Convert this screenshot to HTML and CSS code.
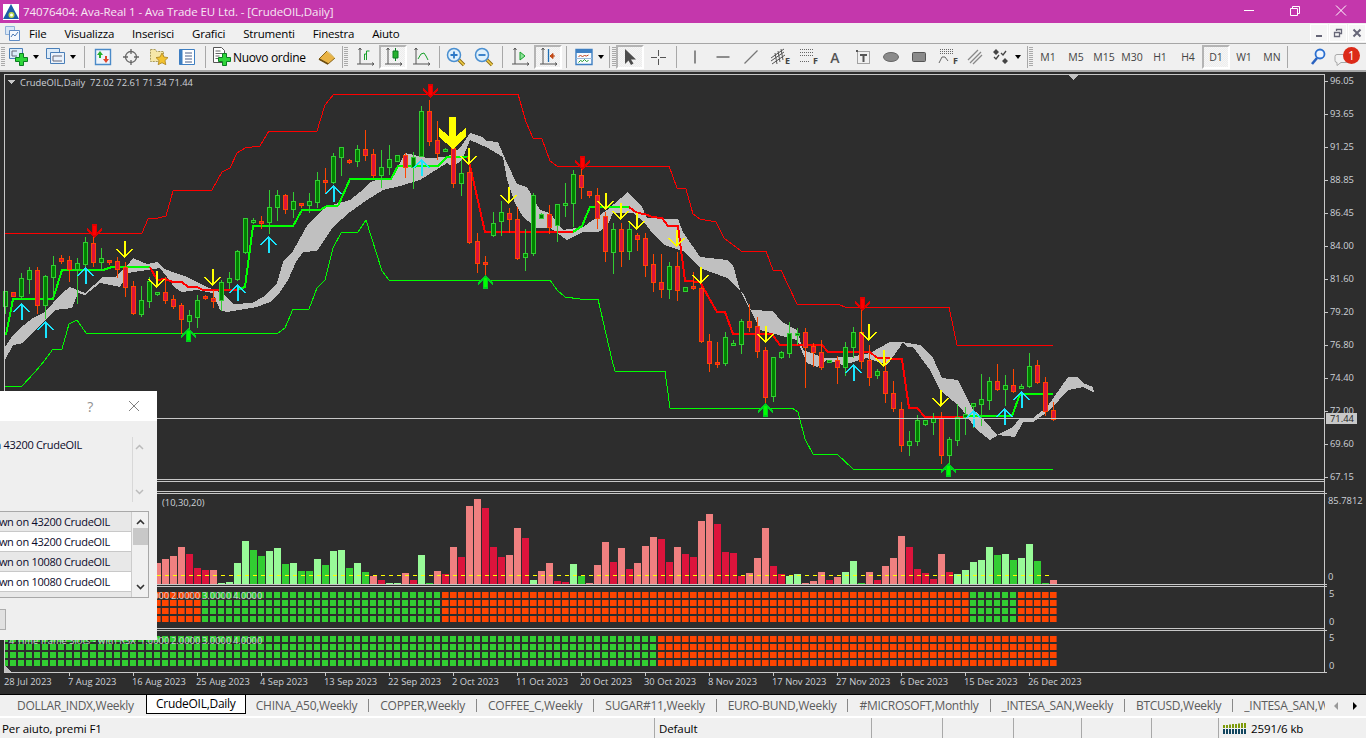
FILE: index.html
```html
<!DOCTYPE html>
<html lang="it">
  <head>
    <meta charset="UTF-8" />
    <title>74076404: Ava-Real 1 - Ava Trade EU Ltd. - [CrudeOIL,Daily]</title>
    <link rel="stylesheet" href="styles.css">
  </head>
  <body>
    <svg class="defs" width="0" height="0">
      <symbol id="plus" viewBox="0 0 13 13"><path d="M4.5.5h4v4h4v4h-4v4h-4v-4h-4v-4h4z" fill="#2fd53a" stroke="#0b7d22"/></symbol>
      <symbol id="axes" viewBox="0 0 20 20"><path d="M5 1v16M2 17h17M3.5 3L5 1l1.5 2M17 15.5l2 1.5-2 1.5" fill="none" stroke="#555"/></symbol>
      <symbol id="lens" viewBox="0 0 20 20"><path d="M12 12l6 6" stroke="#8a6a10" stroke-width="3.4"/><path d="M12 12l6 6" stroke="#f2cf4a" stroke-width="1.6"/><circle cx="8" cy="8" r="6.5" fill="#dff0fb" stroke="#4a8fd0" stroke-width="1.5"/></symbol>
    </svg>

    <header class="titlebar">
      <svg class="app-logo" width="16" height="16" viewBox="0 0 16 16"><rect width="16" height="16" fill="#fff"/><path d="M8 0L16 15H0z" fill="#1d5ba8"/><circle cx="8.5" cy="11" r="3" fill="#b9d64a"/><circle cx="8.5" cy="11" r="1.5" fill="#fff"/></svg>
      <span class="title-text">74076404: Ava-Real 1 - Ava Trade EU Ltd. - [CrudeOIL,Daily]</span>
      <div class="win-btns">
        <svg width="46" height="23" viewBox="0 0 46 23"><path d="M18 10.5h10" stroke="#fff"/></svg>
        <svg width="46" height="23" viewBox="0 0 46 23"><path d="M18.5 8.5h7v7h-7zM20.5 8V6.5h7v7H26" fill="none" stroke="#fff"/></svg>
        <svg width="46" height="23" viewBox="0 0 46 23"><path d="M18 5.5l10 10M28 5.5l-10 10" stroke="#fff"/></svg>
      </div>
    </header>

    <nav class="menubar">
      <svg class="menu-icon" width="15" height="15" viewBox="0 0 15 15"><path d="M.5.5h9v8h-9z" fill="#d8e6f5" stroke="#8fb0d8"/><path d="M4.5 4.5h10v10h-10z" fill="#f4f8fd" stroke="#5d8ac4"/><path d="M6 11l2-3 2 2 3-4" fill="none" stroke="#4a79b5"/></svg>
      <span>File</span><span>Visualizza</span><span>Inserisci</span><span>Grafici</span><span>Strumenti</span><span>Finestra</span><span>Aiuto</span>
      <div class="mdi-btns">
        <div class="mdi-btn"><svg width="10" height="10" viewBox="0 0 10 10"><path d="M2 8h6" stroke="#667" stroke-width="2"/></svg></div>
        <div class="mdi-btn"><svg width="10" height="10" viewBox="0 0 10 10"><path d="M1.5 4.5h5v4h-5zM3.5 3V1.5h5v4H7" fill="none" stroke="#667" stroke-width="1.3"/></svg></div>
        <div class="mdi-btn"><svg width="10" height="10" viewBox="0 0 10 10"><path d="M1.500 1.500l7 7M8.500 1.500l-7 7" stroke="#667" stroke-width="2"/></svg></div>
      </div>
    </nav>

    <div class="toolbar">
      <div class="grip g-first"></div>
      <div class="tool narrow t-first"><svg width="20" height="20" viewBox="0 0 20 20"><path d="M.5 1.500h13v10H.5z" fill="#dcebf8" stroke="#4a7fb8"/><path d="M3 4h5M3 4v5h5" fill="none" stroke="#667"/><use href="#plus" x="6" y="6" width="13" height="13"/></svg></div>
      <div class="caret"></div>
      <div class="tool narrow t-prof"><svg width="20" height="20" viewBox="0 0 20 20"><path d="M.5 1.500h13v10H.5z" fill="#dcebf8" stroke="#4a7fb8"/><path d="M4.5 5.500h14v11h-14z" fill="#eaf2fb" stroke="#4a7fb8"/><path d="M7 9h9M7 9v5h9" fill="none" stroke="#667"/></svg></div>
      <div class="caret"></div>
      <div class="sep s11"></div>
      <div class="tool"><svg width="18" height="18" viewBox="0 0 18 18"><path d="M1.5 1.500h15v15h-15z" fill="#eef4fb" stroke="#4a8ac8" stroke-width="1.4"/><path d="M6 3l3 4H7v3H5V7H3z" fill="#25b02e"/><path d="M12 15l-3-4h2V8h2v3h2z" fill="#e2452a"/></svg></div>
      <div class="tool"><svg width="18" height="18" viewBox="0 0 18 18"><circle cx="9" cy="9" r="5.5" fill="none" stroke="#666" stroke-width="1.3"/><path d="M9 1v5M9 12v5M1 9h5M12 9h5" stroke="#666" stroke-width="1.3"/></svg></div>
      <div class="tool"><svg width="20" height="20" viewBox="0 0 20 20"><path d="M1.5 2.500h5l1 2h7v10h-13z" fill="#f6e7a8" stroke="#a99a5a" stroke-dasharray="2 1"/><path d="M13 6l2 4 4 .6-3 2.900.8 4.200-3.800-2-3.800 2 .8-4.200-3-2.900 4-.6z" fill="#f2c230" stroke="#a9801a" stroke-width=".8"/></svg></div>
      <div class="tool"><svg width="18" height="18" viewBox="0 0 18 18"><path d="M1.5 1.500h15v15h-15z" fill="#fff" stroke="#3e7fc2"/><path d="M1.5 1.500h3v15h-3z" fill="#3e7fc2"/><path d="M7 5h7M7 8h7M7 11h7M7 14h7" stroke="#4a5f88"/></svg></div>
      <div class="sep s8"></div>
      <div class="tool order">
        <svg width="20" height="20" viewBox="0 0 20 20"><path d="M1.5.5h8l3 3v12h-11z" fill="#fff" stroke="#555"/><path d="M3.5 4h5M3.5 6.500h7M3.5 9h4M3.5 11.500h3" stroke="#666"/><use href="#plus" x="6" y="6" width="13" height="13"/></svg>
        <span>Nuovo ordine</span>
      </div>
      <div class="tool"><svg width="18" height="18" viewBox="0 0 18 18"><path d="M1 11l8-8 8 7-7 6z" fill="#e9b345" stroke="#8a6418"/><path d="M9 3l8 7" stroke="#f7e2a0"/><path d="M1 11l9 5" stroke="#6d4d10" stroke-width="1.5"/></svg></div>
      <div class="sep s2"></div>
      <div class="grip g-mid"></div>
      <div class="tool"><svg width="20" height="20"><use href="#axes" width="20" height="20"/><path d="M9.5 13V7h2M11.5 13V4h3" fill="none" stroke="#17a02a"/></svg></div>
      <div class="tool pressed"><svg width="20" height="20"><use href="#axes" width="20" height="20"/><path d="M12.5 1v13" stroke="#0b7d22"/><path d="M10 4h5v7h-5z" fill="#25b02e" stroke="#0b7d22"/></svg></div>
      <div class="tool"><svg width="20" height="20"><use href="#axes" width="20" height="20"/><path d="M7 12l3-5 3-1 2 3 2 4" fill="none" stroke="#17a02a"/></svg></div>
      <div class="sep s7"></div>
      <div class="tool"><svg width="20" height="20"><use href="#lens" width="20" height="20"/><path d="M4.5 8h7M8 4.500v7" stroke="#2b78c6" stroke-width="1.8"/></svg></div>
      <div class="tool"><svg width="20" height="20"><use href="#lens" width="20" height="20"/><path d="M4.5 8h7" stroke="#2b78c6" stroke-width="1.8"/></svg></div>
      <div class="sep s8"></div>
      <div class="tool"><svg width="20" height="20"><use href="#axes" width="20" height="20"/><path d="M10 5l5 4-5 4z" fill="#8fe29a" stroke="#17a02a"/></svg></div>
      <div class="tool pressed"><svg width="20" height="20"><use href="#axes" width="20" height="20"/><path d="M10.5 2v13" stroke="#1f6fb5" stroke-width="1.3"/><path d="M17 9h-3M12 9l3-2.500v5z" fill="#d9531e" stroke="#b8420f"/></svg></div>
      <div class="sep s8"></div>
      <div class="tool narrow t-tpl"><svg width="18" height="18" viewBox="0 0 18 18"><path d="M1 1.500h16v15H1z" fill="#f7fbff" stroke="#3e7fc2" stroke-width="1.4"/><path d="M1 2h16v3H1z" fill="#3e7fc2"/><path d="M1 10.500h16" stroke="#9cb8d8"/><path d="M3.5 8.500l2-1 2 1 2-1 2 .5 2-1" fill="none" stroke="#c2411c"/><path d="M3.5 14.500l2-2 2 1 2-2 2 2 2-1" fill="none" stroke="#1f9a2a"/></svg></div>
      <div class="caret"></div>
      <div class="sep s6"></div>
      <div class="grip g-tools"></div>
      <div class="tool pressed"><svg width="16" height="18" viewBox="0 0 16 18"><path d="M3 1v15l3.500-3.500L9 17l2.500-1.500-2.500-4H14z" fill="#4d4d4d"/></svg></div>
      <div class="tool"><svg width="17" height="17" viewBox="0 0 17 17"><path d="M8.500 1v6M8.500 10v6M1 8.500h6M10 8.500h6" stroke="#555"/></svg></div>
      <div class="sep s8"></div>
      <div class="tool t-line"><svg width="16" height="16" viewBox="0 0 16 16"><path d="M8 1.500v13" stroke="#555" stroke-width="1.3"/></svg></div>
      <div class="tool"><svg width="16" height="16" viewBox="0 0 16 16"><path d="M1.500 8h13" stroke="#555" stroke-width="1.3"/></svg></div>
      <div class="tool"><svg width="16" height="16" viewBox="0 0 16 16"><path d="M1.500 14.500l13-13" stroke="#777" stroke-width="1.3"/></svg></div>
      <div class="tool"><svg width="20" height="20" viewBox="0 0 20 20"><path d="M2 11L15 2M2 14L15 5M3 17L16 8M6 6l2 11M9 4l2 11M12 2l2 11" stroke="#555" fill="none"/></svg><b class="tool-mark">E</b></div>
      <div class="tool"><svg width="20" height="20" viewBox="0 0 20 20"><path d="M3 2.500h13M3 5.500h13M3 8.500h13M3 14.500h9" stroke="#666" stroke-dasharray="1 1"/></svg><b class="tool-mark">F</b></div>
      <div class="tool"><span class="tool-a">A</span></div>
      <div class="tool"><svg width="16" height="16" viewBox="0 0 16 16"><path d="M2.500 2.500h12v12h-12z" fill="none" stroke="#555" stroke-dasharray="1 1"/><rect x="1" y="1" width="2" height="2" fill="#555"/><path d="M5 5h7v2H9.500v6h-2V7H5z" fill="#555"/></svg></div>
      <div class="tool"><svg width="16" height="12" viewBox="0 0 16 12"><ellipse cx="8" cy="6" rx="7.500" ry="4.500" fill="#8a8a8a" stroke="#666"/></svg></div>
      <div class="tool"><svg width="14" height="10" viewBox="0 0 14 10"><rect x=".5" y=".5" width="13" height="9" rx="1" fill="#8a8a8a" stroke="#555"/></svg></div>
      <div class="tool"><svg width="20" height="20" viewBox="0 0 20 20"><path d="M3 2.500h14M3 4.500h14M3 6.500h14" stroke="#666" stroke-dasharray="1 1"/><path d="M2 16l3-6h3l3 4" fill="none" stroke="#666"/></svg><b class="tool-mark">F</b></div>
      <div class="tool"><svg width="16" height="16" viewBox="0 0 16 16"><path d="M1 11L11 1M3 14L14 3M6 15L15 6" stroke="#888" stroke-width="1.3"/></svg></div>
      <div class="tool narrow t-obj"><svg width="18" height="16" viewBox="0 0 18 16"><path d="M4 0l3 3-3 3-3-3zM13 9l3 3-3 3-3-3z" fill="#444"/><path d="M2 8l2 2 3-4M9 4l2 2 3-4" fill="none" stroke="#444" stroke-width="1.3"/></svg></div>
      <div class="caret c-obj"></div>
      <div class="sep s2 s-obj"></div>
      <div class="grip g-tf"></div>
      <div class="tool tf">M1</div><div class="tool tf">M5</div><div class="tool tf">M15</div><div class="tool tf">M30</div><div class="tool tf">H1</div><div class="tool tf">H4</div><div class="tool tf pressed">D1</div><div class="tool tf">W1</div><div class="tool tf">MN</div>
      <div class="sep s2"></div>
      <div class="tool-end">
        <svg width="16" height="18" viewBox="0 0 16 18"><path d="M7 10l-5 6" stroke="#2a62c0" stroke-width="2.6"/><circle cx="10" cy="6" r="4.5" fill="#eef5ff" stroke="#2a6fd0" stroke-width="1.8"/></svg>
        <div class="chat">
          <svg width="18" height="14" viewBox="0 0 18 14"><path d="M3 1.500h12a2 2 0 012 2v4a2 2 0 01-2 2H7l-4 3v-3a2 2 0 01-2-2v-4a2 2 0 012-2z" fill="#f2f2f2" stroke="#a8a8a8"/></svg>
          <span class="badge">1</span>
        </div>
      </div>
    </div>

    <main class="chart">
      <svg id="chart-svg" width="1366" height="622" viewBox="0 72 1366 622"></svg>

      <section class="dialog">
        <div class="dialog-title">
          <span class="dlg-help">?</span>
          <svg width="12" height="12" viewBox="0 0 12 12"><path d="M1 1l10 10M11 1L1 11" stroke="#808080"/></svg>
        </div>
        <div class="dialog-body">
          <div class="dialog-msg">
            <p>Stochastic Down on 43200 CrudeOIL</p>
            <div class="msg-scroll">
              <svg width="9" height="6" viewBox="0 0 9 6"><path d="M1 5l3.500-3.500L8 5" fill="none" stroke="#bbb" stroke-width="1.5"/></svg>
              <svg width="9" height="6" viewBox="0 0 9 6"><path d="M1 1l3.500 3.500L8 1" fill="none" stroke="#bbb" stroke-width="1.5"/></svg>
            </div>
          </div>
          <div class="dialog-list">
            <div class="rows">
              <div class="row alt">Stochastic Down on 43200 CrudeOIL</div>
              <div class="row">Stochastic Down on 43200 CrudeOIL</div>
              <div class="row alt">Stochastic Down on 10080 CrudeOIL</div>
              <div class="row">Stochastic Down on 10080 CrudeOIL</div>
              <div class="row alt"></div>
            </div>
            <div class="list-scroll">
              <svg width="9" height="6" viewBox="0 0 9 6"><path d="M1 5l3.500-3.500L8 5" fill="none" stroke="#333" stroke-width="1.6"/></svg>
              <div class="thumb"></div>
              <svg width="9" height="6" viewBox="0 0 9 6"><path d="M1 1l3.500 3.500L8 1" fill="none" stroke="#333" stroke-width="1.6"/></svg>
            </div>
          </div>
          <button class="dialog-btn">OK</button>
        </div>
      </section>
    </main>

    <div class="tabs">
      <span class="tab t-dollar">DOLLAR_INDX,Weekly</span>
      <span class="tab active">CrudeOIL,Daily</span>
      <span class="tab">CHINA_A50,Weekly</span><i></i>
      <span class="tab">COPPER,Weekly</span><i></i>
      <span class="tab">COFFEE_C,Weekly</span><i></i>
      <span class="tab">SUGAR#11,Weekly</span><i></i>
      <span class="tab">EURO-BUND,Weekly</span><i></i>
      <span class="tab">#MICROSOFT,Monthly</span><i></i>
      <span class="tab">_INTESA_SAN,Weekly</span><i></i>
      <span class="tab">BTCUSD,Weekly</span><i></i>
      <span class="tab last">_INTESA_SAN,Weekly</span>
      <div class="tab-nav"><em class="left"></em><em class="right"></em></div>
    </div>

    <footer class="statusbar">
      <span class="st st-help">Per aiuto, premi F1</span>
      <span class="st st-profile">Default</span>
      <span class="st st-a"></span>
      <span class="st st-b"></span>
      <span class="st st-c"></span>
      <span class="st st-d"></span>
      <span class="st st-e"></span>
      <span class="st st-conn">
        <svg width="24" height="13" viewBox="0 0 24 13"><path d="M1 3v3M4 3v3M7 2.500v3.500M10 2v4M13 2v4M16 1.500v4.500M19 1v5M22 1v5" stroke="#7d9a0a" stroke-width="2"/><path d="M1 7v5M4 7v5M7 7v5M10 7v5M13 7v5M16 7v5M19 7v5M22 7v5" stroke="#12465f" stroke-width="2"/></svg>
        2591/6 kb
      </span>
    </footer>

    <script src="script.js"></script>
  </body>
</html>
```

FILE: styles.css
```css
* {
  margin: 0;
  padding: 0;
  box-sizing: border-box;
}

html,
body {
  width: 1366px;
  height: 738px;
  overflow: hidden;
}

body {
  font-family: "Open Sans", "Noto Sans", sans-serif;
  font-size: 11.5px;
  color: #000;
  background: #f0f0f0;
  display: flex;
  flex-direction: column;
}

.defs {
  position: absolute;
}

/* title */
.titlebar {
  height: 23px;
  background: #c437ac;
  color: #f7e9f4;
  display: flex;
  align-items: center;
  padding-left: 3px;
  letter-spacing: -0.08px;
}

.title-text {
  margin-left: 4px;
}

.win-btns {
  margin-left: auto;
  display: flex;
  margin-right: 2px;
  height: 23px;
}

/* menu */
.menubar {
  height: 21px;
  display: flex;
  align-items: center;
  gap: 18px;
  padding-left: 5px;
  border-bottom: 1px solid #a6a6a6;
  letter-spacing: -0.2px;
}

.menu-icon {
  margin-right: -9px;
}

.mdi-btns {
  margin-left: auto;
  display: flex;
  gap: 1px;
  align-self: flex-start;
  margin-top: 1px;
}

.mdi-btn {
  width: 18px;
  height: 18px;
  background: #f6f6f6;
  border: 1px solid #fff;
  display: flex;
  align-items: center;
  justify-content: center;
}

/* toolbar */
.toolbar {
  height: 28px;
  display: flex;
  align-items: center;
  border-bottom: 2px solid #a8a8a8;
}

.grip {
  width: 4px;
  height: 20px;
  background: repeating-linear-gradient(#aaa 0 1px, transparent 1px 2px);
}

.g-first {
  margin-left: 1px;
  margin-right: 2px;
}

.g-mid {
  margin: 0 3px 0 1px;
}

.g-tf {
  margin: 0 1px;
}

.tool {
  width: 28px;
  height: 24px;
  flex: none;
  display: flex;
  align-items: center;
  justify-content: center;
  position: relative;
}

.narrow {
  width: 24px;
}

.t-prof {
  margin-left: 3px;
}

.t-tpl {
  margin-left: 2px;
}

.t-line {
  margin-left: 1px;
}

.pressed {
  border: 2px solid;
  border-color: #b4b4b4 #fff #fff #b4b4b4;
  background: repeating-conic-gradient(#f6f6f6 0 25%, #ededed 0 50%) 0 0 / 2px 2px;
}

.caret {
  width: 0;
  height: 0;
  margin: 0 2px;
  border: 3px solid transparent;
  border-top: 4px solid #000;
  border-bottom: 0;
  flex: none;
}

.sep {
  height: 22px;
  flex: none;
  position: relative;
}

.sep::after {
  content: "";
  position: absolute;
  left: 50%;
  top: 0;
  bottom: 0;
  width: 1px;
  background: #a8a8a8;
}

.s11 { width: 11px; }
.s8 { width: 8px; }
.s7 { width: 7px; }
.s6 { width: 6px; }
.s2 { width: 2px; }
.s-obj { margin-left: 3px; }

.order {
  width: 104px;
  justify-content: flex-start;
  padding-left: 3px;
  gap: 1px;
  font-size: 12px;
  letter-spacing: -0.33px;
}

.tool-mark {
  position: absolute;
  right: 3px;
  bottom: 2px;
  font-size: 9px;
  font-weight: 700;
  color: #444;
}

.tool-a {
  font-size: 14px;
  font-weight: 600;
  color: #555;
}

.tf {
  font-size: 10.5px;
  color: #444;
}

.tool-end {
  margin-left: auto;
  display: flex;
  align-items: center;
  gap: 8px;
  padding-right: 14px;
}

.chat {
  position: relative;
  width: 18px;
  height: 14px;
  margin-top: 6px;
}

.badge {
  position: absolute;
  left: 9px;
  top: -6px;
  width: 17px;
  height: 17px;
  border-radius: 50%;
  background: #dc2a18;
  color: #fff;
  font-size: 12px;
  line-height: 17px;
  text-align: center;
}

/* chart */
.chart {
  height: 622px;
  position: relative;
  background: #2d2d2d;
  overflow: hidden;
  flex: none;
}

#chart-svg {
  display: block;
  shape-rendering: crispEdges;
}

#chart-svg text {
  font-family: "Open Sans", "Noto Sans", sans-serif;
  font-size: 9.4px;
  fill: #ced2d8;
}

#chart-svg .price-tag {
  fill: #222;
}

/* dialog over the chart, mostly off the left of the screen */
.dialog {
  position: absolute;
  left: -143px;
  top: 319px;
  width: 300px;
  height: 249px;
  background: #efefef;
  font-size: 11px;
  letter-spacing: -0.3px;
  color: #0a0a2a;
}

.dialog-title {
  height: 30px;
  background: #fff;
  display: flex;
  align-items: center;
  justify-content: flex-end;
  padding-right: 17px;
}

.dlg-help {
  font-size: 14px;
  color: #909090;
  margin-right: 35px;
}

.dialog-body {
  height: 219px;
  position: relative;
}

.dialog-msg {
  display: flex;
  justify-content: flex-end;
  height: 67px;
  margin-top: 15px;
  position: absolute;
  top: 0;
  right: 0;
  width: 100%;
}

.dialog-msg p {
  margin-right: 50px;
  white-space: nowrap;
  margin-top: 1px;
}

.msg-scroll {
  width: 1px;
  margin-right: 24px;
  position: relative;
  background: #d8d8d8;
  height: 65px;
  margin-top: 1px;
}

.msg-scroll svg {
  position: absolute;
  left: 3px;
}

.msg-scroll svg:first-child {
  top: 7px;
}

.msg-scroll svg:last-child {
  bottom: 7px;
}

.dialog-list {
  position: absolute;
  top: 90px;
  left: 0;
  right: 8px;
  height: 87px;
  border: 1px solid #a8a8a8;
  background: #fff;
  display: flex;
}

.rows {
  flex: 1;
  overflow: hidden;
}

.row {
  height: 20px;
  line-height: 19px;
  text-align: right;
  padding-right: 21px;
  border-bottom: 1px solid #c8c8c8;
}

.alt {
  background: #e8e8e8;
}

.list-scroll {
  width: 17px;
  border-left: 1px solid #ccc;
  background: #f0f0f0;
  display: flex;
  flex-direction: column;
  align-items: center;
  padding-top: 7px;
  position: relative;
}

.list-scroll svg:last-child {
  position: absolute;
  bottom: 7px;
}

.thumb {
  width: 15px;
  height: 17px;
  margin-top: 3px;
  background: #c8c8c8;
}

.dialog-btn {
  position: absolute;
  top: 188px;
  right: 151px;
  width: 75px;
  height: 21px;
  background: #e1e1e1;
  border: 1px solid #adadad;
  font: inherit;
}

/* tabs */
.tabs {
  height: 22px;
  flex: none;
  border-top: 1px solid #000;
  display: flex;
  align-items: center;
  font-size: 12px;
  letter-spacing: -0.28px;
  color: #5c5c5c;
  position: relative;
  overflow: hidden;
  white-space: nowrap;
}

.tabs i {
  width: 1px;
  height: 13px;
  background: #888;
  flex: none;
  margin: 0 11px;
}

.tab {
  flex: none;
}

.t-dollar {
  margin-left: 17px;
  margin-right: 12px;
}

.active {
  height: 19px;
  margin-top: -2px;
  width: 100px;
  line-height: 18px;
  background: #fff;
  color: #000;
  border: 1px solid #000;
  border-top: 0;
  margin-right: 10px;
  text-align: center;
}

.last {
  width: 81px;
  overflow: hidden;
}

.tab-nav {
  position: absolute;
  right: 0;
  top: 0;
  bottom: 0;
  width: 39px;
  background: #f0f0f0;
}

.tab-nav em {
  position: absolute;
  top: 7px;
  border: 4px solid transparent;
  border-left: 0;
}

.tab-nav .left {
  left: 7px;
  border-right: 4px solid #999;
}

.tab-nav .right {
  left: 26px;
  border-right: 0;
  border-left: 4px solid #000;
}

/* status */
.statusbar {
  height: 22px;
  flex: none;
  display: flex;
  align-items: center;
  letter-spacing: -0.1px;
  border-top: 2px solid #fff;
}

.st {
  height: 100%;
  display: flex;
  align-items: center;
  flex: none;
  border-right: 1px solid #a8a8a8;
}

.st-help {
  width: 655px;
  padding-left: 2px;
}

.st-profile {
  width: 217px;
  padding-left: 4px;
}

.st-a { width: 71px; }
.st-b { width: 71px; }
.st-c { width: 68px; }
.st-d { width: 70px; }
.st-e { width: 67px; }

.st-conn {
  border-right: 0;
  padding-left: 4px;
  gap: 4px;
}
```

FILE: script.js
```js
// bars: x = 5 + 8 * k, [color, wick top, body top, body bottom, wick bottom]
// values were read off 3x crops, so each block has its own top y
const candleBlocks = [
  { top: 80, from: 0, bars: [
    ["g",632,632,678,700],["r",637,637,647,647],["g",580,595,647,655],["g",560,571,597,640],["r",562,570,675,700],
    ["g",585,588,675,715],["g",528,556,590,650],["r",525,535,543,548],["r",528,541,567,602],["g",535,550,568,668],
    ["g",470,487,552,560],["r",460,490,545,558],["g",505,535,545,570],["r",540,541,547,552],["r",532,544,566,590],
    ["r",545,562,620,648],["r",603,618,698,703],["g",618,660,702,708],["g",590,604,662,680],["g",637,637,643,645],
    ["r",590,637,660,670],["r",645,658,678,685],["r",668,676,718,760],["g",690,706,722,760],["g",645,660,710,740],
    ["r",645,649,655,657],["r",630,655,662,680],["g",600,607,661,690],["g",577,595,607,625],["g",510,514,597,600],
    ["g",415,415,515,518],["g",415,420,424,430],["r",408,422,425,445],["g",330,382,425,458],["g",330,346,382,420],
    ["r",342,346,386,400],["g",336,364,386,410],["r",368,370,376,382],["g",340,364,376,395],["g",276,300,366,380],
    ["r",265,300,305,335],["g",220,229,305,310],["g",202,202,232,285],["r",238,240,246,248],
  ]},
  { top: 80, from: 44, bars: [
    ["g",195,208,243,258],["r",150,207,224,240],["r",208,222,285,290],["g",210,262,286,320],["g",195,238,262,282],
    ["g",226,226,242,242],["r",220,226,262,292],["g",215,230,262,325],["g",78,94,227,228],["r",60,94,182,195],
    ["r",122,180,220,238],["g",203,206,209,212],["r",175,205,310,320],["g",240,278,310,345],["r",260,277,485,490],
    ["r",460,484,548,575],["r",528,546,548,585],["g",396,428,464,468],["g",362,397,424,464],["r",385,400,418,455],
    ["r",380,418,535,538],["g",447,520,532,570],["g",340,346,518,525],["g",400,403,413,415],["r",375,403,440,458],
    ["g",373,373,436,482],["g",310,370,376,408],["g",270,283,370,438],["r",268,286,320,355],["r",334,334,344,350],
    ["r",325,346,413,443],["r",395,409,512,543],["g",430,448,515,578],["r",430,448,512,558],["g",430,448,512,538],
    ["r",460,466,476,510],["r",458,475,554,587],["r",522,553,607,633],["r",522,607,626,650],["g",546,558,626,654],
    ["r",515,558,630,660],["g",620,620,632,632],["r",575,619,625,627],
  ]},
  { top: 250, from: 87, bars: [
    ["r",110,115,272,275],["r",252,273,338,362],["r",275,337,339,350],["g",245,262,338,346],["g",270,280,281,282],
    ["g",208,214,281,308],["r",162,214,230,242],["r",202,229,302,320],["r",292,301,440,460],["g",321,321,437,452],
    ["g",303,307,322,325],["g",215,250,308,320],["g",235,249,251,282],["r",235,247,290,410],["r",280,289,305,348],
    ["r",270,305,350,358],["g",331,331,337,337],["r",318,331,350,398],["g",275,290,350,375],["g",232,247,290,320],
    ["r",140,247,332,355],["r",285,331,382,404],["g",358,364,376,385],["r",325,364,430,455],["r",392,430,475,482],
    ["r",456,478,586,603],["g",543,574,584,614],["g",495,510,572,585],["g",510,511,521,525],["g",490,505,515,552],
    ["r",485,505,616,638],["g",560,568,616,650],["g",463,500,569,584],["g",472,491,500,552],["g",460,460,467,530],
    ["g",373,448,461,525],["g",380,394,451,476],["r",342,394,416,420],["g",376,406,416,465],["r",358,406,422,425],
    ["g",402,407,409,414],["g",310,349,409,412],["r",330,346,397,400],["r",380,397,482,495],["r",456,481,507,510],
  ]},
];

// histogram tops read from a crop with top y 490, baseline 280
const hist = "p218 p207 p198 p171 c192 c234 c240 p240 l279 l276 l219 l153 g180 g198 l183 l174 g222 l219 g243 g243 " +
  "l207 g225 l183 l180 g234 l219 g246 p258 c270 l279 l279 p249 c270 l195 g279 p243 c252 p171 c201 p48 p27 c54 c171 c201 " +
  "p195 p114 c144 l270 p243 p219 c273 c276 l222 g258 p279 p225 p156 c216 p174 c237 p219 p168 p141 c147 c216 p171 c192 " +
  "c201 p93 p72 c102 c186 c189 c258 p249 p204 p114 c228 c252 l258 l252 p279 p273 p246 c270 p261 l246 l213 g279 p246 c270 " +
  "p228 p204 p138 c171 c237 c249 c267 p192 c246 l252 l240 l216 l210 l171 g195 l192 g210 l204 l162 g213 g279 p270";
const histColors = { p: "#f08080", c: "#dc143c", l: "#98fb98", g: "#32cd32" };

// real page coordinates
const thinRed = [[5,233],[142,233],[148,219],[158,218],[166,216],[173,191],[212,190],[222,172],[230,168],[237,153],[245,148],[260,146],[269,131],[317,131],[325,105],[334,94],[518,94],[526,122],[533,138],[542,139],[550,161],[557,166],[669,166],[677,188],[686,189],[693,214],[700,219],[716,222],[724,238],[741,251],[766,251],[773,270],[781,270],[797,304],[840,305],[845,307],[949,307],[957,345],[1053,345]];
const thinGreen = [[5,387],[22,386],[35,372],[45,360],[53,349],[62,349],[69,324],[77,320],[86,333],[278,333],[285,328],[293,309],[309,309],[317,288],[325,280],[333,248],[341,233],[358,232],[366,220],[382,271],[389,280],[550,280],[557,290],[565,297],[580,299],[598,299],[612,360],[615,371],[665,371],[670,408],[792,408],[798,412],[805,439],[813,454],[837,454],[853,469],[1053,469]];
const thick = [
  ["#00ff00", [[6,335],[13,299],[53,299],[62,270],[103,270],[112,267],[150,267]]],
  ["#ff0000", [[150,267],[157,280],[165,279],[173,282],[182,282],[188,287],[197,287],[203,290],[237,290]]],
  ["#00ff00", [[237,290],[245,287],[253,226],[293,226],[302,210],[320,210],[327,206],[338,206]]],
  ["#00ff00", [[338,206],[350,179],[391,179],[398,166],[438,166],[447,157],[468,157]]],
  ["#ff0000", [[468,157],[485,232],[573,232]]],
  ["#00ff00", [[573,232],[582,226],[590,207],[629,207]]],
  ["#ff0000", [[629,207],[637,213],[645,214],[652,217],[662,218],[668,226],[678,226],[685,281],[700,282],[717,312],[725,312],[733,334],[772,334],[780,345],[822,345],[828,352],[870,352],[877,358],[902,359],[909,408],[917,408],[925,417],[963,417]]],
  ["#00ff00", [[963,416],[1012,416],[1020,394],[1053,394]]],
];
const cloudTop = [[5,347],[13,335],[20,328],[33,318],[43,313],[53,303],[62,293],[70,287],[85,293],[103,277],[115,277],[128,265],[133,258],[147,264],[157,262],[163,268],[172,272],[187,277],[207,287],[222,293],[233,304],[252,303],[263,297],[277,283],[283,262],[293,251],[308,224],[325,207],[350,200],[360,192],[370,182],[383,178],[392,178],[405,153],[427,158],[447,157],[460,148],[470,133],[482,137],[487,141],[498,142],[507,163],[517,184],[527,187],[540,210],[550,213],[563,230],[583,227],[607,210],[628,192],[642,207],[647,218],[670,219],[678,219],[683,232],[700,257],[727,260],[733,265],[740,290],[750,310],[773,311],[782,322],[797,330],[803,350],[825,358],[850,357],[870,353],[890,342],[902,342],[920,345],[933,358],[942,378],[958,380],[973,410],[978,413],[997,435],[1013,427],[1020,418],[1033,418],[1047,407],[1068,377],[1078,377],[1083,383],[1093,387],[1094,393]];
const cloudBottom = [[5,360],[13,345],[23,343],[37,328],[55,310],[72,308],[78,293],[85,295],[100,283],[120,287],[128,273],[147,270],[160,268],[167,277],[175,288],[182,292],[197,290],[213,293],[220,310],[227,312],[257,307],[270,302],[278,295],[288,280],[296,262],[303,252],[317,251],[333,227],[350,212],[367,200],[383,190],[400,186],[420,180],[447,163],[453,167],[462,160],[470,140],[488,148],[503,157],[507,180],[515,203],[523,217],[537,228],[550,228],[567,240],[583,232],[598,232],[607,227],[613,213],[633,213],[645,223],[652,233],[665,245],[685,252],[700,268],[727,278],[743,293],[760,330],[797,340],[807,363],[817,367],[827,360],[843,365],[867,358],[887,365],[900,347],[903,342],[907,347],[913,347],[930,370],[940,390],[960,407],[977,430],[990,440],[998,435],[1015,437],[1023,422],[1033,422],[1050,410],[1068,390],[1083,387],[1093,392]];

const yellowArrows = [[124,257],[156,287],[212,285],[468,164],[508,203],[605,209],[620,219],[636,229],[676,246],[700,283],[765,342],[868,340],[883,366],[940,406]];
const cyanArrows = [[21,304],[45,322],[85,268],[237,285],[268,237],[333,186],[421,160],[853,365],[973,411],[1004,409],[1021,392]];
const redArrows = [[94,238],[430,98],[582,170],[862,311]];
const greenArrows = [[188,328],[485,275],[765,403],[948,463]];

const axisLabels = [["96.05",81],["93.65",114],["91.25",147],["88.85",180],["86.45",213],["84.00",246],["81.60",279],["79.20",312],["76.80",345],["74.40",378],["72.00",411],["69.60",444],["67.15",477]];
const dates = ["28 Jul 2023","7 Aug 2023","16 Aug 2023","25 Aug 2023","4 Sep 2023","13 Sep 2023","22 Sep 2023","2 Oct 2023","11 Oct 2023","20 Oct 2023","30 Oct 2023","8 Nov 2023","17 Nov 2023","27 Nov 2023","6 Dec 2023","15 Dec 2023","26 Dec 2023"];

const RIGHT = 1324;
const LEFT = 4;
let out = "";

function rect(x, y, w, h, fill) {
  out += `<rect x="${x}" y="${y}" width="${w}" height="${h}" fill="${fill}"/>`;
}

function poly(pts, color, width) {
  const p = pts.map((a) => a.join(",")).join(" ");
  out += `<polyline points="${p}" fill="none" stroke="${color}" stroke-width="${width}"/>`;
}

function text(x, y, str, cls) {
  out += `<text x="${x}" y="${y}"${cls ? ` class="${cls}"` : ""}>${str}</text>`;
}

function drawCandles() {
  candleBlocks.forEach((block) => {
    block.bars.forEach((b, i) => {
      const cx = 5 + 8 * (block.from + i);
      const py = (v) => Math.round(block.top + v / 3);
      const green = b[0] === "g";
      const edge = green ? "#32cd32" : "#ff4500";
      const fill = green ? "#008000" : "#dc143c";
      const top = py(b[2]);
      const h = Math.max(py(b[3]) - top, 2);
      rect(cx, py(b[1]), 1, py(b[4]) - py(b[1]) + 1, edge);
      rect(cx - 2, top, 5, h + 1, edge);
      if (h > 1) rect(cx - 1, top + 1, 3, h - 1, fill);
    });
  });
}

// thin arrow: dir -1 points down (tip is the bottom), 1 points up
function thinArrow(x, tip, dir, color) {
  const tx = x + 0.5;
  out += `<path d="M${tx} ${tip}v${dir * 16}M${tx - 8} ${tip + dir * 8}L${tx} ${tip}L${tx + 8} ${tip + dir * 8}" fill="none" stroke="${color}" stroke-width="2"/>`;
}

function fatArrow(x, tip, dir, color, dark) {
  const s = dir;
  out += `<path d="M${x - 7} ${tip + s * 7}L${x} ${tip}L${x + 8} ${tip + s * 7}L${x + 8} ${tip + s * 10}L${x + 3} ${tip + s * 6}L${x + 3} ${tip + s * 14}L${x - 2} ${tip + s * 14}L${x - 2} ${tip + s * 6}L${x - 7} ${tip + s * 10}z" fill="${color}"/>`;
  rect(x - 1, s > 0 ? tip + 3 : tip - 12, 3, 9, dark);
}

function drawPanels() {
  const lines = [74, 479, 481, 491, 493, 584, 586, 628, 630, 672];
  lines.forEach((y) => rect(LEFT, y, RIGHT - LEFT + 1, 1, "#c8c8c8"));
  rect(LEFT, 74, 1, 599, "#c8c8c8");
  rect(RIGHT, 74, 1, 599, "#c8c8c8");
  // axis ticks
  axisLabels.forEach((a) => rect(RIGHT, a[1], 4, 1, "#c8c8c8"));
  [493, 584, 586, 630, 672].forEach((y) => rect(RIGHT, y, 3, 1, "#c8c8c8"));
  // chart shift marker and corner mark
  out += `<path d="M1068 75h10l-5 5z" fill="#c0c0c0"/>`;
  out += `<path d="M5 666l6 6h-6z" fill="#c0c0c0"/>`;
}

function drawMain() {
  const cloud = cloudTop.concat(cloudBottom.slice().reverse());
  out += `<polygon points="${cloud.map((a) => a.join(",")).join(" ")}" fill="#c0c0c0"/>`;
  poly(thinRed, "#ff0000", 1);
  poly(thinGreen, "#00ff00", 1);
  thick.forEach((t) => poly(t[1], t[0], 2));
  drawCandles();
  yellowArrows.forEach((a) => thinArrow(a[0], a[1], -1, "#ffff00"));
  cyanArrows.forEach((a) => thinArrow(a[0], a[1], 1, "#19e5ff"));
  redArrows.forEach((a) => fatArrow(a[0], a[1], -1, "#e00000", "#ff0000"));
  greenArrows.forEach((a) => fatArrow(a[0], a[1], 1, "#00d020", "#00ff00"));
  // big double arrow
  out += `<path d="M449 117h7v19l10-8v9l-13 12-14-12v-9l10 8z" fill="#ffff00"/>`;
  // current price line
  rect(LEFT, 418, RIGHT - LEFT, 1, "#c8c8c8");
}

function drawHistogram() {
  hist.split(" ").forEach((h, i) => {
    const cx = 5 + 8 * (19 + i);
    const top = Math.round(490 + Number(h.slice(1)) / 3);
    rect(cx - 3, top, 7, 584 - top, histColors[h[0]]);
  });
  out += `<line x1="157" y1="575.5" x2="1052" y2="575.5" stroke="#ffff00" stroke-dasharray="4 4"/>`;
}

function drawSlots() {
  const cell = (cx, y, c) => {
    if (c === "g") {
      rect(Math.max(cx - 3, 5), y, cx - 3 < 5 ? 3 : 6, 6, "#32cd32");
    } else {
      rect(cx - 3, y, 7, 6, "#a83a1e");
      rect(cx - 3, y, 6, 6, "#ff4500");
    }
  };
  for (let k = 0; k < 132; k++) {
    const cx = 5 + 8 * k;
    const a = k <= 24 ? "r" : k <= 54 ? "g" : k <= 120 ? "r" : k <= 126 ? "g" : "r";
    const b = k <= 81 ? "g" : "r";
    for (let r = 0; r < 4; r++) {
      cell(cx, 592 + 8 * r, a);
      cell(cx, 636 + 8 * r, b);
    }
  }
}

function drawLabels() {
  out += `<path d="M8 80h7l-3.500 4z" fill="#c8c8c8"/>`;
  text(20, 86, "CrudeOIL,Daily &#160;72.02 72.61 71.34 71.44");
  axisLabels.forEach((a) => text(1330, a[1] + 3, a[0]));
  rect(1326, 413, 31, 11, "#c8c8c8");
  text(1330, 422, "71.44", "price-tag");
  text(162, 506, "(10,30,20)");
  text(1328, 504, "85.7812");
  text(1328, 580, "0");
  text(1329, 597, "5");
  text(1329, 625, "0");
  text(1329, 641, "5");
  text(1329, 669, "0");
  ["1.0000", "2.0000", "3.0000", "4.0000"].forEach((s, i) => {
    text(140 + 31 * i, 599, s);
    text(140 + 31 * i, 644, s);
  });
  text(9, 644, "4 Time frame Slots - with RSX");
  dates.forEach((d, i) => {
    const x = 5 + 64 * i;
    if (i > 0) rect(x, 672, 1, 4, "#c8c8c8");
    text(x - 1, 685, d);
  });
}

function render() {
  drawMain();
  drawHistogram();
  drawSlots();
  drawPanels();
  drawLabels();
  document.getElementById("chart-svg").innerHTML = out;
}

render();
```
